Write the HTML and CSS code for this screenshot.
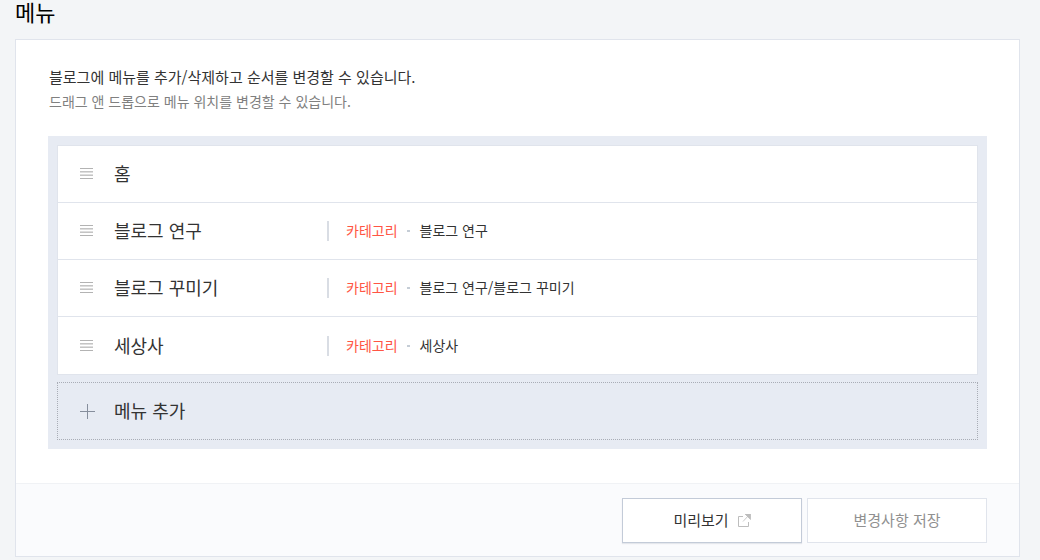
FILE: index.html
```html
<!DOCTYPE html>
<html lang="ko">
<head>
<meta charset="utf-8">
<title>메뉴</title>
<link rel="stylesheet" href="styles.css">
</head>
<body>
<svg class="sprite" aria-hidden="true">
  <symbol id="grip" viewBox="0 0 13 12">
    <path d="M0 0h13v1H0zM0 10h13v1H0z" fill="#b3b3b3"/>
    <path d="M0 3h13v1H0zM0 7h13v1H0z" fill="#c4c4c4"/>
    <path d="M0 4h13v1H0zM0 6h13v1H0z" fill="#dedede"/>
  </symbol>
</svg>
<main class="page">
  <h1 class="page-title">메뉴</h1>
  <section class="card">
    <div class="card-body">
      <p class="lead">블로그에 메뉴를 추가/삭제하고 순서를 변경할 수 있습니다.</p>
      <p class="hint">드래그 앤 드롭으로 메뉴 위치를 변경할 수 있습니다.</p>
      <div class="panel">
        <ul class="menu-list">
          <li class="menu-row">
            <svg class="grip"><use href="#grip"/></svg>
            <span class="menu-name">홈</span>
          </li>
          <li class="menu-row">
            <svg class="grip"><use href="#grip"/></svg>
            <span class="menu-name">블로그 연구</span>
            <span class="menu-info"><span class="kind">카테고리</span><span class="dot"></span><span class="target">블로그 연구</span></span>
          </li>
          <li class="menu-row">
            <svg class="grip"><use href="#grip"/></svg>
            <span class="menu-name">블로그 꾸미기</span>
            <span class="menu-info"><span class="kind">카테고리</span><span class="dot"></span><span class="target">블로그 연구/블로그 꾸미기</span></span>
          </li>
          <li class="menu-row">
            <svg class="grip"><use href="#grip"/></svg>
            <span class="menu-name">세상사</span>
            <span class="menu-info"><span class="kind">카테고리</span><span class="dot"></span><span class="target">세상사</span></span>
          </li>
        </ul>
        <button type="button" class="add-menu">
          <svg class="plus" viewBox="0 0 15 15" aria-hidden="true"><path d="M7 0h1v15H7zM0 7h15v1H0z" fill="#868e9c"/></svg>
          <span class="add-label">메뉴 추가</span>
        </button>
      </div>
    </div>
    <footer class="card-footer">
      <button type="button" class="btn btn-preview">미리보기
        <svg class="external" viewBox="0 0 13 13" aria-hidden="true"><path d="M5 2.500H.5v10h10V8" fill="none" stroke="#bdbdbd"/><path d="M7 0h5.500v5.500zM11 1 5 7.500" fill="#bdbdbd" stroke="#bdbdbd" stroke-width=".8"/></svg>
      </button>
      <button type="button" class="btn btn-save">변경사항 저장</button>
    </footer>
  </section>
</main>
</body>
</html>
```
FILE: styles.css
```css
* {
  box-sizing: border-box;
}

body {
  margin: 0;
  background: #f3f5f7;
  color: #333;
  font-family: "Noto Sans CJK KR", "Noto Sans", sans-serif;
  font-weight: 400;
}

button {
  font: inherit;
  color: inherit;
  cursor: pointer;
}

.sprite {
  display: none;
}

.page {
  padding: 0 20px 3px 15px;
}

.page-title {
  margin: 0 0 17px;
  color: #000;
  font-size: 22px;
  font-weight: 400;
  line-height: 22px;
}

.card {
  background: #fff;
  border: 1px solid #e0e4ec;
}

.card-body {
  padding: 25px 32px 34px;
}

.lead,
.hint {
  margin: 0;
  padding-left: 1px;
}

.lead {
  font-size: 15px;
  line-height: 24px;
}

.hint {
  color: #808080;
  font-size: 14px;
  line-height: 24px;
}

.panel {
  margin-top: 23px;
  padding: 9px;
  background: #e7ebf3;
}

.menu-list {
  margin: 0 0 7px;
  padding: 0;
  list-style: none;
  background: #fff;
  border: 1px solid #e0e4ec;
}

.menu-row {
  display: flex;
  align-items: center;
  height: 57px;
  padding-left: 22px;
  border-bottom: 1px solid #e0e4ec;
}

.menu-row:last-child {
  border-bottom: 0;
}

.grip {
  width: 13px;
  height: 12px;
  margin-right: 21px;
}

.menu-name {
  width: 213px;
  padding-bottom: 2px;
  font-size: 18px;
  line-height: 26px;
}

.menu-info {
  display: flex;
  align-items: center;
  padding-left: 17px;
  border-left: 2px solid #d9dde4;
  font-size: 14px;
  line-height: 20px;
}

.kind,
.target {
  height: 20px;
  line-height: 18px;
}

.kind {
  color: #ff5544;
}

.dot {
  width: 3px;
  height: 2px;
  margin: 0 10px 0 9px;
  background: #c5cdd6;
}

.add-menu {
  display: flex;
  align-items: center;
  gap: 19px;
  width: 100%;
  height: 58px;
  padding: 0 22px;
  background: none;
  border: 1px dotted #a9adb6;
  font-size: 18px;
  line-height: 26px;
}

.add-label {
  padding-bottom: 3px;
}

.plus {
  width: 15px;
  height: 15px;
}

.card-footer {
  display: flex;
  justify-content: flex-end;
  gap: 5px;
  padding: 14px 32px 13px;
  background: #fafbfd;
  border-top: 1px solid #f0f2f5;
}

.btn {
  display: flex;
  align-items: center;
  justify-content: center;
  gap: 9px;
  width: 180px;
  height: 45px;
  padding: 0 0 2px;
  background: #fff;
  border: 1px solid #e0e4ec;
  font-size: 15px;
}

.btn-preview {
  border-color: #c3cbd8;
  box-shadow: 0 1px 1px #e4e7ec;
}

.btn-save {
  color: #909090;
}

.external {
  width: 13px;
  height: 13px;
  margin-top: 2px;
}
```
